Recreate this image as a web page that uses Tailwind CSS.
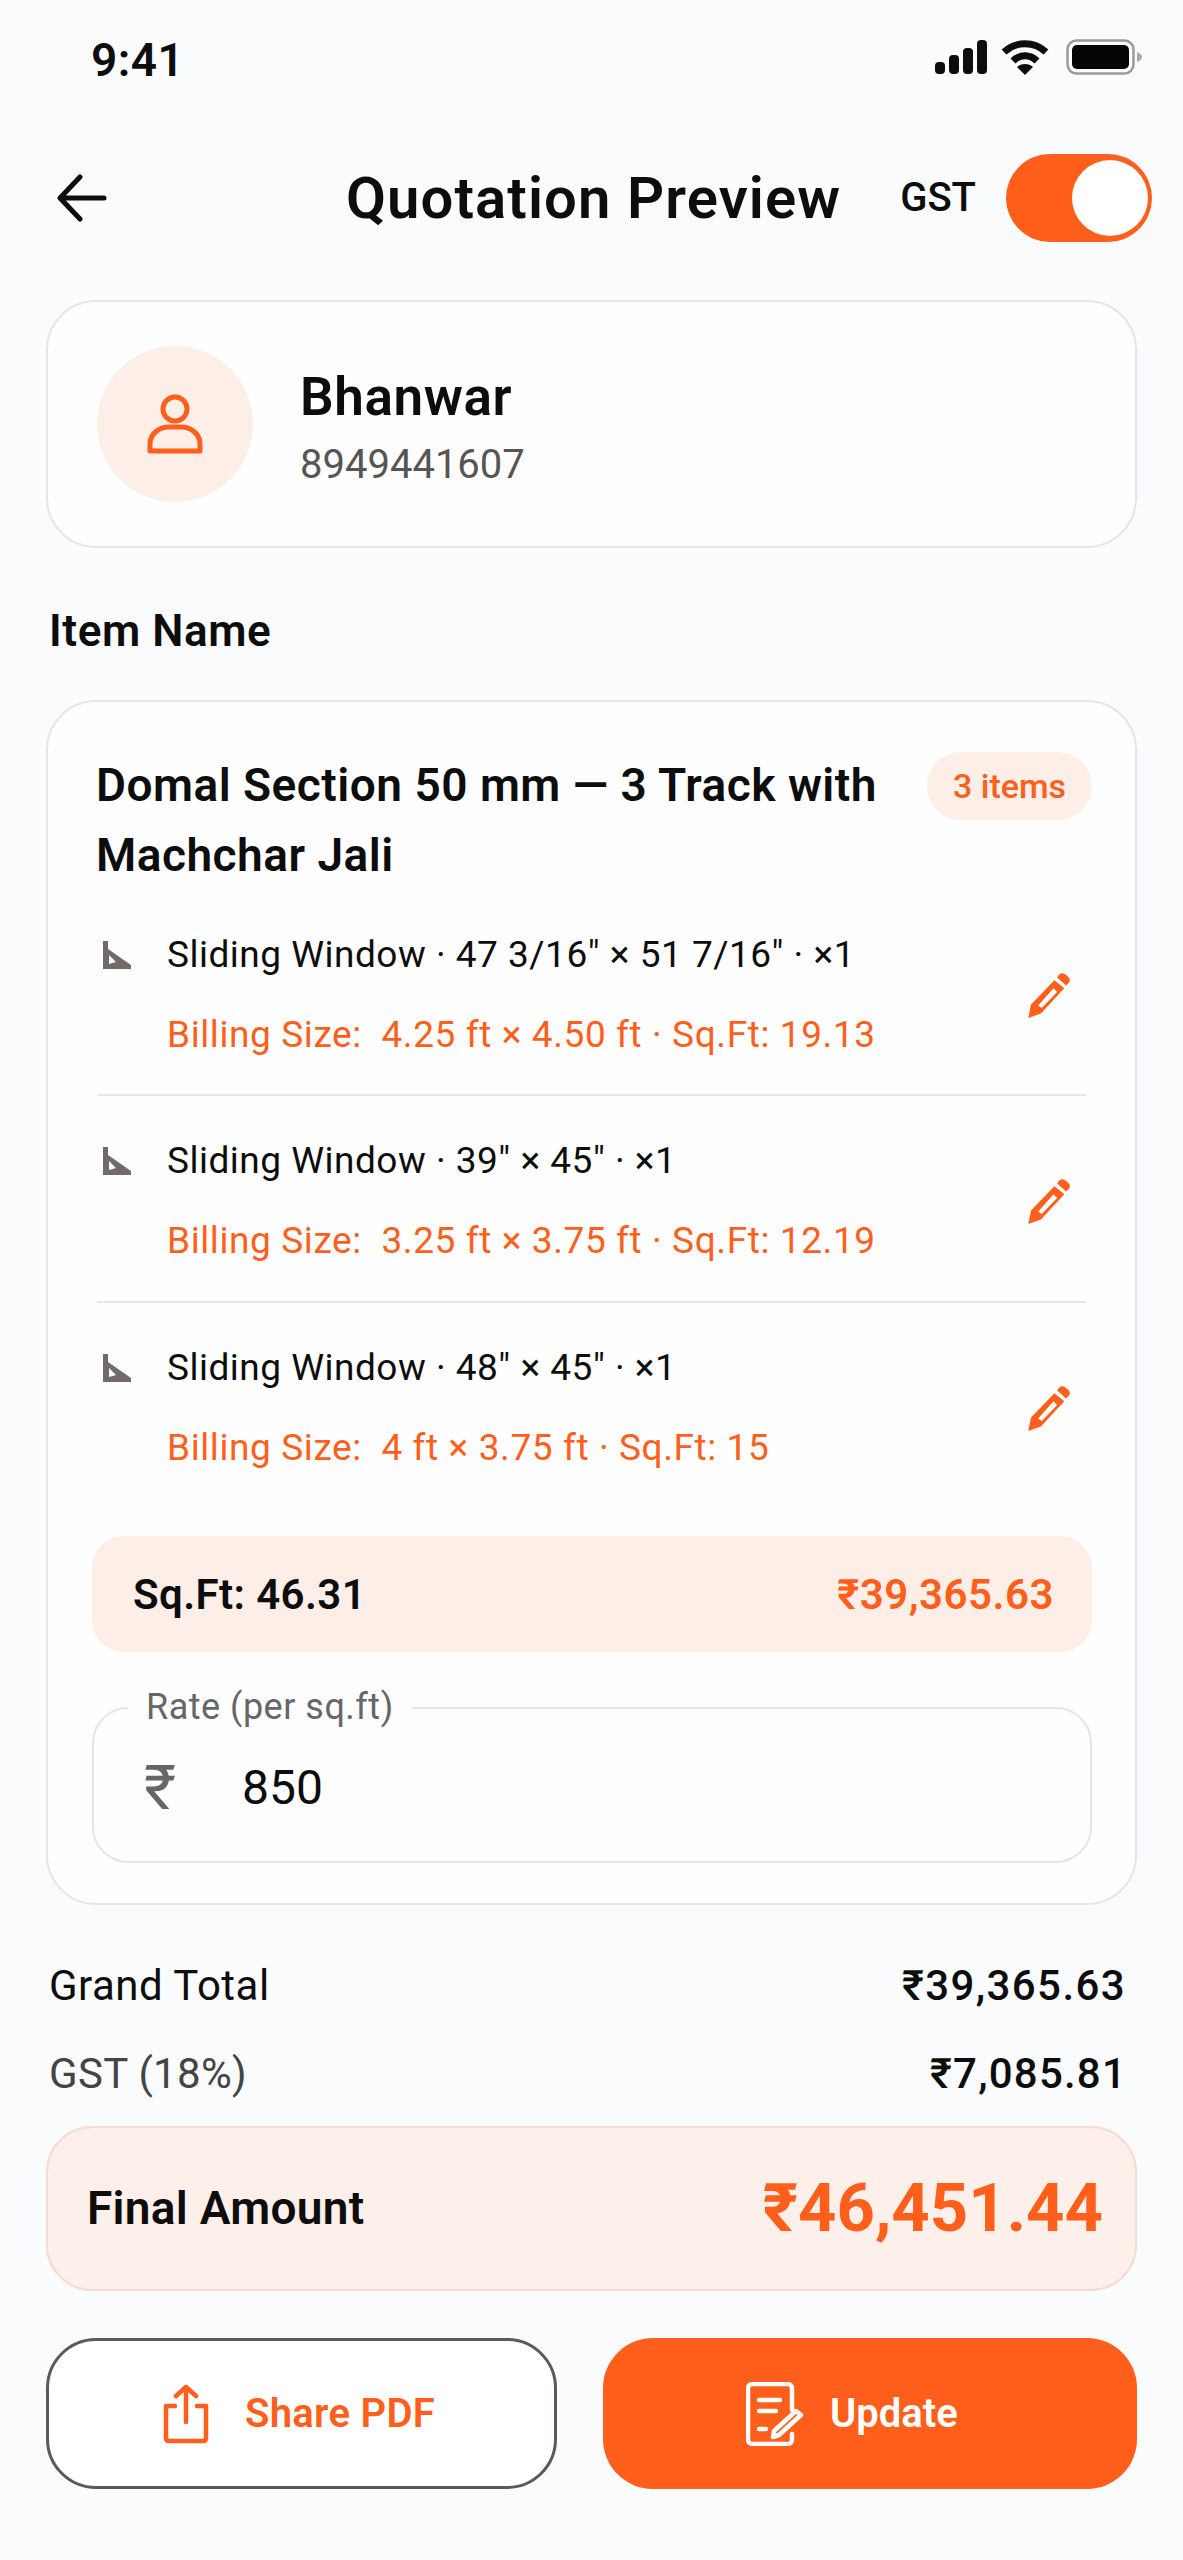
<!DOCTYPE html>
<html lang="en">
<head>
  <meta charset="UTF-8">
  <title>Quotation Preview</title>
  <script src="https://cdn.jsdelivr.net/npm/@tailwindcss/browser@4"></script>
</head>
<body class="bg-[#fafbfd]">
<div class="w-[1183px] h-[2560px] px-[46px] font-['Roboto','Noto_Sans',sans-serif] text-[#0d0d0d] overflow-hidden">

  <!-- status bar -->
  <div class="h-[120px] flex items-center justify-between pl-[45px]">
    <span class="text-[46px] tracking-[0.5px] font-semibold leading-none">9:41</span>
    <div class="flex items-center gap-[13px] -mr-[5px] mb-[6px]">
      <svg width="54" height="34" viewBox="0 0 54 34" fill="#0d0d0d">
        <rect x="1" y="22" width="10" height="12" rx="4"/>
        <rect x="15" y="15" width="10" height="19" rx="4"/>
        <rect x="29" y="8" width="10" height="26" rx="4"/>
        <rect x="43" y="0" width="10" height="34" rx="4"/>
      </svg>
      <svg width="48" height="36" viewBox="0 0 48 36" fill="none" stroke="#0d0d0d" stroke-width="7">
        <path d="M3 13C15 2 33 2 45 13"/>
        <path d="M12 22C19 15 29 15 36 22"/>
        <path d="M24 36L16 28C20 24 28 24 32 28Z" fill="#0d0d0d" stroke="none"/>
      </svg>
      <svg width="76" height="36" viewBox="0 0 76 36" class="ml-[4px]">
        <rect x="1.5" y="1.5" width="66" height="33" rx="9" fill="none" stroke="#9a9a9a" stroke-width="2.5"/>
        <rect x="6" y="6" width="57" height="24" rx="5" fill="#050505"/>
        <path d="M71 13c3 1 5 3 5 5s-2 4-5 5z" fill="#a8a8a8"/>
      </svg>
    </div>
  </div>

  <!-- header -->
  <div class="h-[88px] mt-[34px] flex items-center">
    <svg width="50" height="48" viewBox="0 0 50 48" fill="none" stroke="#0d0d0d" stroke-width="5" stroke-linecap="round" stroke-linejoin="round" class="ml-[11px]">
      <path d="M47 24H3M23 3L3 24L23 45"/>
    </svg>
    <h1 class="ml-[239px] text-[58px] tracking-[1.1px] font-semibold leading-none whitespace-nowrap">Quotation Preview</h1>
    <span class="ml-auto text-[40px] font-medium leading-none">GST</span>
    <div class="ml-[30px] -mr-[15px] w-[146px] h-[88px] rounded-full bg-[#ff5f1a] flex items-center justify-end pr-[4px]">
      <div class="w-[76px] h-[76px] rounded-full bg-white"></div>
    </div>
  </div>

  <!-- customer -->
  <div class="mt-[58px] h-[248px] w-[1091px] rounded-[50px] border-2 border-[#e3e5e8] bg-[#fefefe] flex items-center pl-[49px]">
    <div class="w-[156px] h-[156px] rounded-full bg-[#fdeee8] flex items-center justify-center">
      <svg width="56" height="60" viewBox="0 0 56 60" fill="none" stroke="#ff5f1a" stroke-width="5">
        <circle cx="28" cy="15" r="12"/>
        <path d="M3 57V50C3 40 12 33 22 33H34C44 33 53 40 53 50V57Z" stroke-linejoin="round"/>
      </svg>
    </div>
    <div class="ml-[47px] pt-[14px]">
      <div class="text-[53px] tracking-[0.6px] font-semibold leading-[68px]">Bhanwar</div>
      <div class="text-[40px] leading-[68px] text-[#555555]">8949441607</div>
    </div>
  </div>

  <div class="mt-[53px] h-[60px] flex items-center pl-[3px] text-[44px] tracking-[0.6px] font-semibold">Item Name</div>

  <!-- item card -->
  <div class="mt-[39px] h-[1205px] w-[1091px] rounded-[50px] border-2 border-[#e3e5e8] bg-[#fefefe] pl-[48px] pr-[46px] pt-[48px]">
    <div class="flex items-start justify-between">
      <h2 class="w-[810px] text-[46px] tracking-[0.5px] font-semibold leading-[70px]">Domal Section 50 mm — 3 Track with Machchar Jali</h2>
      <span class="mt-[2px] -mr-[3px] h-[68px] w-[165px] rounded-[34px] bg-[#fdeee8] text-[#ff5f1a] text-[34px] font-medium flex items-center justify-center">3 items</span>
    </div>

    <div class="ml-[1px] pr-[3px]">
      <!-- row 1 -->
      <div class="h-[206px] pt-[25px] border-b-2 border-[#e6e6e8] flex">
        <div class="w-[70px] h-[80px] flex items-center pl-[6px]">
          <svg width="28" height="28" viewBox="0 0 28 28" fill="#736a68"><path fill-rule="evenodd" d="M0 0H5V8L28 24V28H0ZM6 14V23L13 21Z"/></svg>
        </div>
        <div class="flex-1 tracking-[0.5px]">
          <div class="h-[80px] flex items-center text-[37px] whitespace-pre">Sliding Window · 47 3/16" × 51 7/16" · ×1</div>
          <div class="h-[80px] flex items-center text-[37px] tracking-[0.6px] whitespace-pre text-[#ff5f1a]">Billing Size:  4.25 ft × 4.50 ft · Sq.Ft: 19.13</div>
        </div>
        <div class="h-[160px] flex items-center pr-[15px]">
          <svg width="44" height="45" viewBox="0 0 48 50" fill="#ff5f1a"><path fill-rule="evenodd" d="M30 8L41 17L15 45L1 50L4 35ZM29 17L12 36L16 39L33 21Z"/><path d="M35 2C38 -1 41 0 44 3C48 6 48 9 45 12L43 14L33 5Z"/></svg>
        </div>
      </div>
      <!-- row 2 -->
      <div class="h-[207px] pt-[25px] border-b-2 border-[#e6e6e8] flex">
        <div class="w-[70px] h-[80px] flex items-center pl-[6px]">
          <svg width="28" height="28" viewBox="0 0 28 28" fill="#736a68"><path fill-rule="evenodd" d="M0 0H5V8L28 24V28H0ZM6 14V23L13 21Z"/></svg>
        </div>
        <div class="flex-1 tracking-[0.5px]">
          <div class="h-[80px] flex items-center text-[37px] whitespace-pre">Sliding Window · 39" × 45" · ×1</div>
          <div class="h-[80px] flex items-center text-[37px] tracking-[0.6px] whitespace-pre text-[#ff5f1a]">Billing Size:  3.25 ft × 3.75 ft · Sq.Ft: 12.19</div>
        </div>
        <div class="h-[160px] flex items-center pr-[15px]">
          <svg width="44" height="45" viewBox="0 0 48 50" fill="#ff5f1a"><path fill-rule="evenodd" d="M30 8L41 17L15 45L1 50L4 35ZM29 17L12 36L16 39L33 21Z"/><path d="M35 2C38 -1 41 0 44 3C48 6 48 9 45 12L43 14L33 5Z"/></svg>
        </div>
      </div>
      <!-- row 3 -->
      <div class="h-[185px] pt-[25px] flex">
        <div class="w-[70px] h-[80px] flex items-center pl-[6px]">
          <svg width="28" height="28" viewBox="0 0 28 28" fill="#736a68"><path fill-rule="evenodd" d="M0 0H5V8L28 24V28H0ZM6 14V23L13 21Z"/></svg>
        </div>
        <div class="flex-1 tracking-[0.5px]">
          <div class="h-[80px] flex items-center text-[37px] whitespace-pre">Sliding Window · 48" × 45" · ×1</div>
          <div class="h-[80px] flex items-center text-[37px] tracking-[0.6px] whitespace-pre text-[#ff5f1a]">Billing Size:  4 ft × 3.75 ft · Sq.Ft: 15</div>
        </div>
        <div class="h-[160px] flex items-center pr-[15px]">
          <svg width="44" height="45" viewBox="0 0 48 50" fill="#ff5f1a"><path fill-rule="evenodd" d="M30 8L41 17L15 45L1 50L4 35ZM29 17L12 36L16 39L33 21Z"/><path d="M35 2C38 -1 41 0 44 3C48 6 48 9 45 12L43 14L33 5Z"/></svg>
        </div>
      </div>
    </div>

    <div class="mt-[48px] -ml-[4px] -mr-[3px] h-[116px] rounded-[32px] bg-[#fdeee8] pl-[41px] pr-[38px] flex items-center justify-between text-[42px] font-semibold">
      <span class="tracking-[0.4px]">Sq.Ft: 46.31</span>
      <span class="text-[#ff5f1a] tracking-[0.5px]">₹39,365.63</span>
    </div>

    <div class="relative mt-[55px] -ml-[4px] -mr-[3px] h-[156px] rounded-[36px] border-2 border-[#e3e5e8] flex items-center pl-[50px] pt-[6px]">
      <span class="absolute left-[34px] -top-[24px] bg-[#fefefe] px-[18px] text-[36px] tracking-[0.5px] leading-[44px] text-[#666666]">Rate (per sq.ft)</span>
      <span class="w-[98px] text-[62px] leading-none text-[#666666]">₹</span>
      <span class="text-[48px] leading-none">850</span>
    </div>
  </div>

  <!-- totals -->
  <div class="mt-[50px] h-[60px] flex items-center justify-between pl-[3px] pr-[11px] text-[42px]">
    <span class="tracking-[0.5px]">Grand Total</span>
    <span class="font-medium tracking-[1.4px]">₹39,365.63</span>
  </div>
  <div class="mt-[28px] h-[60px] flex items-center justify-between pl-[3px] pr-[10px] text-[42px]">
    <span class="text-[#444444] tracking-[0.3px]">GST (18%)</span>
    <span class="font-medium tracking-[1.2px]">₹7,085.81</span>
  </div>

  <div class="mt-[23px] h-[165px] w-[1091px] rounded-[46px] border-2 border-[#f8dbd0] bg-[#fdf0eb] pl-[39px] pr-[32px] flex items-center justify-between">
    <span class="text-[46px] tracking-[0.3px] font-semibold">Final Amount</span>
    <span class="text-[67px] font-bold text-[#ff5f1a]">₹46,451.44</span>
  </div>

  <!-- actions -->
  <div class="mt-[47px] flex justify-between w-[1091px]">
    <button class="w-[511px] h-[151px] rounded-[50px] border-[3px] border-[#5a5a5a] bg-white flex items-center pl-[114px]">
      <svg width="46" height="60" viewBox="0 0 46 60" fill="none" stroke="#ff5f1a" stroke-width="4.5" stroke-linecap="round" stroke-linejoin="round">
        <path d="M23 38V3M13 12L23 3L33 12M12 22H3V54C3 56 4 57 6 57H40C42 57 43 56 43 54V22H34"/>
      </svg>
      <span class="ml-[36px] text-[40px] tracking-[0.3px] font-semibold text-[#ff5f1a]">Share PDF</span>
    </button>
    <button class="w-[534px] h-[151px] rounded-[50px] bg-[#ff5f1a] flex items-center pl-[143px]">
      <svg width="58" height="64" viewBox="0 0 58 64" fill="none" stroke="#ffffff" stroke-width="4.5" stroke-linecap="round" stroke-linejoin="round">
        <path d="M46 28V6C46 4 44 2 42 2H6C4 2 2 4 2 6V58C2 60 4 62 6 62H42C44 62 46 60 46 58V52"/>
        <path d="M13 18H34M13 29H30M13 47H20"/>
        <path d="M28 49L50 29L55 33L33 53L27 55Z"/>
      </svg>
      <span class="ml-[26px] text-[40px] font-semibold text-white">Update</span>
    </button>
  </div>
</div>
</body>
</html>
